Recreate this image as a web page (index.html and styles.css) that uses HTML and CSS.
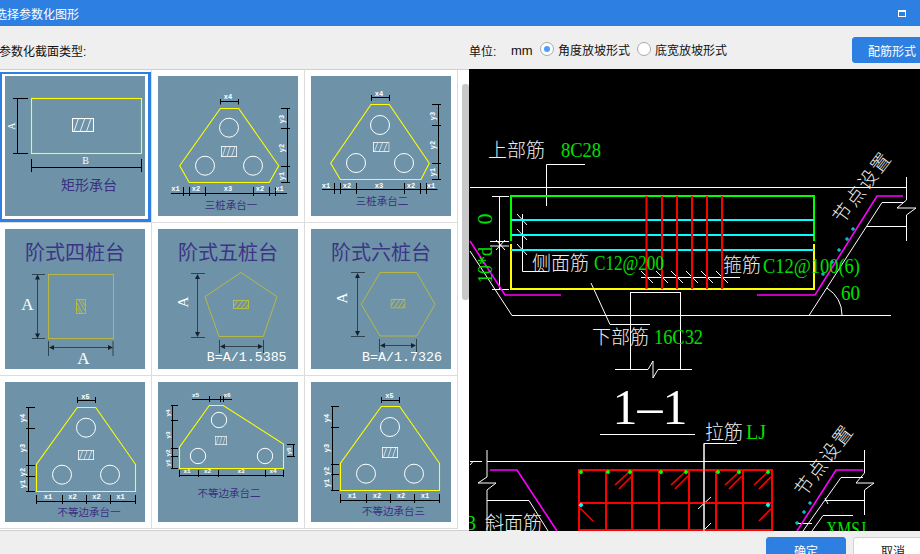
FILE: index.html
```html
<!DOCTYPE html>
<html lang="zh-CN">
<head>
<meta charset="UTF-8" />
<meta name="viewport" content="width=device-width, initial-scale=1" />
<title>选择参数化图形</title>
<link rel="stylesheet" href="styles.css">
</head>
<body>

<svg class="defs" width="0" height="0" aria-hidden="true">
  <symbol id="hatch" viewBox="0 0 21 13" preserveAspectRatio="none">
    <rect class="hatch-box" x="0.5" y="0.5" width="20" height="12"/>
    <path class="hatch-line" d="M2 12L6 1M8 12L12 1M14 12L18 1"/>
  </symbol>
  <symbol id="hatch-small" viewBox="0 0 15 9" preserveAspectRatio="none">
    <rect class="hatch-soft" x="0.5" y="0.5" width="14" height="8"/>
    <path class="hatch-soft" d="M1 6L4 1M4 8L9 1M8 8L13 1M12 8L14 5"/>
  </symbol>
</svg>

<div class="app">
  <div class="titlebar">
    <span class="title">选择参数化图形</span>
    <span class="max-btn"></span>
  </div>

  <div class="toolbar">
    <div class="type-label">参数化截面类型:</div>
    <div class="unit-label">单位:</div>
    <div class="unit">mm</div>
    <span class="radio checked"></span>
    <span class="radio-text">角度放坡形式</span>
    <span class="radio"></span>
    <span class="radio-text">底宽放坡形式</span>
    <button class="btn primary bar-btn">配筋形式</button>
  </div>

  <div class="main">
    <div class="picker">
      <div class="grid">

        <div class="cell selected">
          <svg class="tile" viewBox="0 0 140 140">
            <rect class="outline" x="26.5" y="22.5" width="110" height="55"/>
            <path class="dim" d="M8 22.5H23M8 77.5H23M12.5 22.5V77.5M26.5 83V96M136.5 83V96M26.5 91.5H136.5"/>
            <text class="dim-big" transform="rotate(-90 6 50)" x="6" y="50">A</text>
            <text class="dim-big" x="80.5" y="84">B</text>
            <use href="#hatch" x="67" y="42" width="22" height="14"/>
            <text class="caption large" x="84" y="108">矩形承台</text>
          </svg>
        </div>

        <div class="cell">
          <svg class="tile" viewBox="0 0 140 140">
            <path class="outline" d="M62.3 32.5H80.7L120.7 89.7L111.3 106.5H31.3L21.7 89.7Z"/>
            <circle class="pile" cx="71" cy="51.7" r="9.5"/>
            <circle class="pile" cx="47" cy="89.7" r="9.5"/>
            <circle class="pile" cx="95" cy="89.7" r="9.5"/>
            <use href="#hatch" x="63" y="70" width="16" height="11"/>
            <path class="dim" d="M62.5 23V28.5M80.5 23V28.5M62.5 25.5H80.5M129.5 32.5V106.5M123 32.5H132M123 52.5H132M123 90.5H132M123 106.5H132M13 117.5H129M25.5 111V120M31.5 111V120M47.5 111V120M95.5 111V120M111.5 111V120M117.5 111V120"/>
            <text class="mark" x="70" y="20.5">x4</text>
            <text class="mark" transform="rotate(-90 124 43)" x="124" y="43">y3</text>
            <text class="mark" transform="rotate(-90 124 72)" x="124" y="72">y2</text>
            <text class="mark" transform="rotate(-90 124 100)" x="124" y="100">y1</text>
            <text class="mark" x="17.5" y="113">x1</text>
            <text class="mark" x="38" y="113">x2</text>
            <text class="mark" x="70" y="113">x3</text>
            <text class="mark" x="102" y="113">x2</text>
            <text class="mark" x="121.5" y="113">x1</text>
            <text class="caption" x="73" y="128">三桩承台一</text>
          </svg>
        </div>

        <div class="cell">
          <svg class="tile" viewBox="0 0 140 140">
            <path class="outline" d="M60 28.5H78.3L118.3 87.3L110 103.5H29.3L19.7 87.3Z"/>
            <circle class="pile" cx="69" cy="49" r="9.5"/>
            <circle class="pile" cx="45" cy="87" r="9.5"/>
            <circle class="pile" cx="93" cy="87" r="9.5"/>
            <use href="#hatch" x="62" y="66" width="16.5" height="10"/>
            <path class="dim" d="M60.5 19V25M78.5 19V25M60.5 21.5H78.5M127.5 28.5V103.5M121 28.5H130M121 49.5H130M121 87.5H130M121 103.5H130M11 113.5H126.5M23.5 107V118M29.5 107V118M45.5 107V118M93.5 107V118M109.5 107V118M115.5 107V118"/>
            <text class="mark" x="68" y="17.5">x4</text>
            <text class="mark" transform="rotate(-90 121.5 40)" x="121.5" y="40">y3</text>
            <text class="mark" transform="rotate(-90 121.5 69)" x="121.5" y="69">y2</text>
            <text class="mark" transform="rotate(-90 121.5 96)" x="121.5" y="96">y1</text>
            <text class="mark" x="15" y="109.5">x1</text>
            <text class="mark" x="36" y="109.5">x2</text>
            <text class="mark" x="68" y="109.5">x3</text>
            <text class="mark" x="100" y="109.5">x2</text>
            <text class="mark" x="120" y="109.5">x1</text>
            <text class="caption" x="71" y="124">三桩承台二</text>
          </svg>
        </div>

        <div class="cell">
          <svg class="tile" viewBox="0 0 140 140">
            <text class="heading" x="70" y="22">阶式四桩台</text>
            <rect class="soft-outline" x="43.5" y="45.5" width="65" height="64"/>
            <rect class="soft-outline" x="71.5" y="70.5" width="9" height="14"/>
            <path class="hatch-soft" d="M72 74L77 84M72 79L75 84M74 71L80 82M77 71L80 77"/>
            <path class="soft-dim" d="M27 45.5H40M27 109.5H40M32.5 47V108M43.5 112V127M108 112V127M45 118.5H107"/>
            <path class="arrow" d="M32.5 45.5l-2.5 5h5zM32.5 109.5l-2.5 -5h5zM44 118.5l5 -2.5v5zM108 118.5l-5 -2.5v5z"/>
            <text class="letter" x="22.5" y="75">A</text>
            <text class="letter" x="78.5" y="129">A</text>
          </svg>
        </div>

        <div class="cell">
          <svg class="tile" viewBox="0 0 140 140">
            <text class="heading" x="70" y="22">阶式五桩台</text>
            <path class="soft-outline" d="M83 43.5L119 67.7L105.3 107.5H61L47 67.7Z"/>
            <use href="#hatch-small" x="75" y="71" width="16" height="9"/>
            <path class="soft-dim" d="M33 44.5H47M33 108.5H47M39.5 46V107M61.5 111V124M105.5 111V124M63 117.5H104"/>
            <path class="arrow" d="M39.5 45l-2.5 5h5zM39.5 108l-2.5 -5h5zM62 117.5l5 -2.5v5zM105 117.5l-5 -2.5v5z"/>
            <text class="letter side" transform="rotate(-90 25 73)" x="25" y="73">A</text>
            <text class="formula" x="88.7" y="128">B=A/1.5385</text>
          </svg>
        </div>

        <div class="cell">
          <svg class="tile" viewBox="0 0 140 140">
            <text class="heading" x="70" y="22">阶式六桩台</text>
            <path class="soft-outline" d="M69 43.5H105.7L124 75.3L105.7 107H69L50.3 75.3Z"/>
            <use href="#hatch-small" x="79.5" y="70" width="15" height="9.5"/>
            <path class="soft-dim" d="M40 43.5H54M40 107.5H54M46.5 45V106M68.5 110V123M105.5 110V123M70 116.5H104"/>
            <path class="arrow" d="M46.5 44l-2.5 5h5zM46.5 107l-2.5 -5h5zM69 116.5l5 -2.5v5zM105 116.5l-5 -2.5v5z"/>
            <text class="letter side" transform="rotate(-90 31 69)" x="31" y="69">A</text>
            <text class="formula" x="91" y="128">B=A/1.7326</text>
          </svg>
        </div>

        <div class="cell">
          <svg class="tile" viewBox="0 0 140 140">
            <path class="outline" d="M72.3 25.5H90.7L130.5 82.3V109.5H31.5V82.3Z"/>
            <circle class="pile" cx="81" cy="45.7" r="9.5"/>
            <circle class="pile" cx="57" cy="92.7" r="9.5"/>
            <circle class="pile" cx="105" cy="92.7" r="9.5"/>
            <use href="#hatch" x="73" y="68" width="16" height="10"/>
            <path class="dim" d="M72.5 15V21M90.5 15V21M72.5 18.5H90.5M23.5 25.5V109.5M21 25.5H30M21 46.5H30M21 83.5H30M21 94.5H30M21 109.5H30M31.5 113V122M57.5 113V122M81.5 113V122M105.5 113V122M130.5 113V122M31.5 119.5H130.5"/>
            <text class="mark" x="80.5" y="14.5">x5</text>
            <text class="mark" transform="rotate(-90 17.5 36)" x="17.5" y="36">y4</text>
            <text class="mark" transform="rotate(-90 17.5 66)" x="17.5" y="66">y3</text>
            <text class="mark" transform="rotate(-90 17.5 90)" x="17.5" y="90">y2</text>
            <text class="mark" transform="rotate(-90 17.5 102)" x="17.5" y="102">y1</text>
            <text class="mark" x="43" y="114.5">x1</text>
            <text class="mark" x="67.5" y="114.5">x2</text>
            <text class="mark" x="91.5" y="114.5">x2</text>
            <text class="mark" x="115.5" y="114.5">x1</text>
            <text class="caption" x="84" y="129.5">不等边承台一</text>
          </svg>
        </div>

        <div class="cell">
          <svg class="tile" viewBox="0 0 140 140">
            <path class="outline" d="M51.3 23.5H65.3L125.5 62V86.5H21.5V65.3Z"/>
            <circle class="pile" cx="61" cy="38" r="7.7"/>
            <circle class="pile" cx="40" cy="74" r="7.7"/>
            <circle class="pile" cx="107" cy="74" r="7.7"/>
            <use href="#hatch" x="57" y="54" width="12" height="9"/>
            <path class="dim" d="M34 17.5H74M51.5 14V20M62.5 14V20M65.5 14V20M14.5 23.5V86.5M13 23.5H20M13 38.5H20M13 66.5H20M13 74.5H20M13 86.5H20M129 62.5H137M129 74.5H137M135.5 62.5V74.5M21.5 88V95M40.5 88V95M60.5 88V95M107.5 88V95M125.5 88V95M21.5 93.5H125.5"/>
            <text class="mark small" x="37.5" y="13.5">x5</text>
            <text class="mark small" x="69" y="13.5">x6</text>
            <text class="mark small" transform="rotate(-90 10.5 31)" x="10.5" y="31">y4</text>
            <text class="mark small" transform="rotate(-90 10.5 53)" x="10.5" y="53">y3</text>
            <text class="mark small" transform="rotate(-90 10.5 71)" x="10.5" y="71">y2</text>
            <text class="mark small" transform="rotate(-90 10.5 81)" x="10.5" y="81">y1</text>
            <text class="mark small" transform="rotate(-90 131 69)" x="131" y="69">y5</text>
            <text class="mark small" x="29" y="89">x1</text>
            <text class="mark small" x="49.5" y="89">x2</text>
            <text class="mark small" x="83" y="89">x3</text>
            <text class="mark small" x="115" y="89">x4</text>
            <text class="caption" x="71" y="110.5">不等边承台二</text>
          </svg>
        </div>

        <div class="cell">
          <svg class="tile" viewBox="0 0 140 140">
            <path class="outline" d="M70.3 24.5H88.7L128.5 81.3V108.5H29.5V81.3Z"/>
            <circle class="pile" cx="79" cy="45" r="9.5"/>
            <circle class="pile" cx="55" cy="91.7" r="9.5"/>
            <circle class="pile" cx="103" cy="91.7" r="9.5"/>
            <use href="#hatch" x="71" y="65" width="16" height="11"/>
            <path class="dim" d="M70.5 15V21M88.5 15V21M70.5 18.5H88.5M21.5 24.5V108.5M20 24.5H28M20 45.5H28M20 82.5H28M20 92.5H28M20 108.5H28M29.5 112V121M55.5 112V121M79.5 112V121M103.5 112V121M128.5 112V121M29.5 118.5H128.5"/>
            <text class="mark" x="78.5" y="14">x5</text>
            <text class="mark" transform="rotate(-90 15.5 36)" x="15.5" y="36">y4</text>
            <text class="mark" transform="rotate(-90 15.5 66)" x="15.5" y="66">y3</text>
            <text class="mark" transform="rotate(-90 15.5 89)" x="15.5" y="89">y2</text>
            <text class="mark" transform="rotate(-90 15.5 101)" x="15.5" y="101">y1</text>
            <text class="mark" x="41" y="113.5">x1</text>
            <text class="mark" x="66" y="113.5">x2</text>
            <text class="mark" x="90" y="113.5">x2</text>
            <text class="mark" x="114" y="113.5">x1</text>
            <text class="caption" x="82.5" y="128.5">不等边承台三</text>
          </svg>
        </div>

      </div>
      <div class="scroll-track"><div class="scroll-thumb"></div></div>
    </div>

    <div class="preview">
      <svg class="cad" viewBox="469 69 451 462">
        <!-- section 1-1 upper -->
        <path class="cad-line" d="M470 187.5H907M906.5 177V200L897 208H916L906.5 215V241M867 226.5H907M546.5 206V164.5H585"/>
        <path class="cad-line" d="M492 196.5H509M490 241.5H509M490 246H509M492 289.5H509M499.5 196V289"/>
        <path class="cad-line" d="M496 240L505 250M496 250L505 240"/>
        <path class="cad-line" d="M517 214L527 225M517 229L527 240M517 244L527 255M522.5 214V271.5H547"/>
        <path class="cad-line" d="M641 277.5H740M641 271L653 283M656 271L668 283M671 271L683 283M686 271L698 283M701 271L713 283M716 271L728 283"/>
        <path class="cad-line" d="M470 251L512 315.5H891M809 315.5L882 202.5H903M827 288Q842 298 842 315"/>
        <path class="cad-line" d="M591 283L610 324.5H650M630.5 292V369M680.5 292V369M630.5 292.5H680.5M615 369.5H648L653 361V378L658 369.5H692"/>
        <path class="cad-bar green" d="M511 241V196H814V241"/>
        <path class="cad-bar yellow" d="M511 244V289H814V244"/>
        <path class="cad-bar cyan" d="M511 220H814M511 235H814M511 250H814"/>
        <path class="cad-bar red" d="M646.5 196V289M662 196V289M677 196V289M692 196V289M707 196V289M722 196V289"/>
        <path class="cad-hook" d="M470 241L505 295H561M757 295H815L877 196H903"/>
        <path class="cad-dots" d="M823 272v4M821 274h4M832 260v4M830 262h4M839 248v4M837 250h4M847 237v4M845 239h4M853 227v4M851 229h4"/>

        <text class="cad-cn" x="488" y="157">上部筋</text>
        <text class="cad-num" x="561" y="157" textLength="40" lengthAdjust="spacingAndGlyphs">8C28</text>
        <text class="cad-num tall" transform="rotate(-90 492 219)" x="492" y="219" text-anchor="middle">0</text>
        <text class="cad-num tall" transform="rotate(-90 492 265)" x="492" y="265" text-anchor="middle" textLength="36" lengthAdjust="spacingAndGlyphs">10*d</text>
        <text class="cad-cn" x="532" y="270">侧面筋</text>
        <text class="cad-num" x="594" y="270" textLength="70" lengthAdjust="spacingAndGlyphs">C12@200</text>
        <text class="cad-cn" x="723" y="272">箍筋</text>
        <text class="cad-num" x="763" y="273" textLength="97" lengthAdjust="spacingAndGlyphs">C12@100(6)</text>
        <text class="cad-num" x="841" y="300" textLength="19" lengthAdjust="spacingAndGlyphs">60</text>
        <text class="cad-cn spaced" transform="rotate(-53 862 187)" x="862" y="194" text-anchor="middle">节点设置</text>
        <text class="cad-cn" x="592" y="344">下部筋</text>
        <text class="cad-num" x="654" y="344" textLength="49" lengthAdjust="spacingAndGlyphs">16C32</text>

        <text class="cad-title" x="650" y="424">1–1</text>
        <path class="cad-line" d="M600 434.5H695"/>
        <text class="cad-cn" x="705" y="439">拉筋</text>
        <text class="cad-num" x="746" y="439" textLength="20" lengthAdjust="spacingAndGlyphs">LJ</text>

        <!-- section lower -->
        <path class="cad-line" d="M487 461.5H864M470 461.5H482M470 465L473 461.5M487 450V477L478 483H496L487 490V531M487 500.5H529L548 531"/>
        <path class="cad-line" d="M864.5 450V473L856 483H874L864.5 490V515M825 500.5H864M704 531V443.5H737M803 531L841 477.5H863M812 531L823 515.5H853M798 523.5H812"/>
        <path class="cad-line" d="M698 509L711 497M704 530L711 523M825 498L828 504"/>
        <path class="cad-bar red" d="M579 470H772V530H579ZM606 470V530M632 470V530M659 470V530M689 470V530M716 470V530M743 470V530M579 503H772"/>
        <path class="cad-bar red thin" d="M615 485L629 472M619 489L632 476M671 485L685 472M675 489L688 476M725 485L739 472M729 489L742 476M754 485L768 472M759 489L772 476M580 508L593 521M759 521L772 508"/>
        <path class="cad-line" d="M704 531V443.5"/>
        <path class="cad-hook" d="M490 470H517L557 531M797 531L836 470H863"/>
        <path class="cad-node green" d="M581 469.5l2.5 2.5l-2.5 2.5l-2.5 -2.5zM608 469.5l2.5 2.5l-2.5 2.5l-2.5 -2.5zM630 469.5l2.5 2.5l-2.5 2.5l-2.5 -2.5zM661 469.5l2.5 2.5l-2.5 2.5l-2.5 -2.5zM686 469.5l2.5 2.5l-2.5 2.5l-2.5 -2.5zM718 469.5l2.5 2.5l-2.5 2.5l-2.5 -2.5zM739 469.5l2.5 2.5l-2.5 2.5l-2.5 -2.5zM768 469.5l2.5 2.5l-2.5 2.5l-2.5 -2.5z"/>
        <path class="cad-node cyan" d="M581 502.5l2.5 2.5l-2.5 2.5l-2.5 -2.5zM768 502.5l2.5 2.5l-2.5 2.5l-2.5 -2.5z"/>
        <path class="cad-dots" d="M810 501v4M808 503h4M804 510v4M802 512h4M797 521v4M795 523h4"/>
        <text class="cad-cn spaced" transform="rotate(-53 824 460)" x="824" y="467" text-anchor="middle">节点设置</text>
        <text class="cad-cn" x="485" y="530">斜面筋</text>
        <text class="cad-num" x="476" y="530" text-anchor="end">3</text>
        <text class="cad-num" x="826" y="536" textLength="40" lengthAdjust="spacingAndGlyphs">XMSJ</text>
      </svg>
    </div>
  </div>

  <div class="footer">
    <button class="btn primary">确定</button>
    <button class="btn">取消</button>
  </div>
</div>

</body>
</html>
```

FILE: styles.css
```css
html, body {
  margin: 0; padding: 0;
  overflow: hidden;
  font-family: "Liberation Sans", "Noto Sans CJK SC", sans-serif;
  font-size: 12px;
  color: #111;
}
.defs {
  display: block;
  height: 0;
}
.app {
  width: 920px;
  height: 554px;
  display: flex;
  flex-direction: column;
  overflow: hidden;
  background: #efefef;
}

/* title bar */
.titlebar {
  flex: 0 0 26px;
  display: flex;
  align-items: center;
  justify-content: space-between;
  padding-right: 14px;
  background: #2e7fe2;
  color: #fff;
}
.title {
  margin-left: -5px;
}
.max-btn {
  width: 6px;
  height: 4px;
  border: 1px solid #fff;
  border-top-width: 2px;
}

/* toolbar */
.toolbar {
  flex: 0 0 43px;
  box-sizing: border-box;
  display: flex;
  align-items: center;
  padding-top: 5px;
}
.type-label {
  width: 469px;
  margin-left: -1px;
  flex: none;
}
.unit-label {
  width: 42px;
  flex: none;
  margin-left: 1px;
}
.unit {
  width: 29px;
  flex: none;
  font-size: 13px;
}
.radio {
  width: 12px;
  height: 12px;
  flex: none;
  border: 1px solid #a9a9a9;
  border-radius: 50%;
  background: #fff;
  display: flex;
  align-items: center;
  justify-content: center;
  margin-top: -3px;
}
.radio.checked::before {
  content: "";
  width: 6px;
  height: 6px;
  border-radius: 50%;
  background: #4c9dfb;
}
.radio-text {
  width: 72px;
  margin: -2px 7px 0 4px;
  flex: none;
}
.btn {
  width: 80px;
  height: 26px;
  flex: none;
  padding: 0;
  border: 1px solid #d2d2d2;
  border-radius: 3px;
  background: #fff;
  color: #222;
  font-family: inherit;
  font-size: 12px;
}
.btn.primary {
  border-color: #2e7fe2;
  background: #2e7fe2;
  color: #fff;
}
.bar-btn {
  margin-left: auto;
  margin-right: -12px;
}

/* main area */
.main {
  flex: 0 0 462px;
  display: flex;
}
.picker {
  width: 469px;
  box-sizing: border-box;
  display: flex;
  border-top: 1px solid #d0d0d0;
  border-bottom: 1px solid #d0d0d0;
  background: #fff;
}
.grid {
  width: 459px;
  margin-left: -1px;
  flex: none;
  display: grid;
  grid-template-columns: repeat(3, 153px);
  grid-auto-rows: 153px;
}
.cell {
  position: relative;
  box-sizing: border-box;
  padding: 6px 0 0 6px;
  border-right: 1px solid #dcdcdc;
  border-bottom: 1px solid #dcdcdc;
}
.cell.selected::after {
  content: "";
  position: absolute;
  top: 2px; left: 1px;
  right: 0; bottom: 0;
  border: 2px solid #2e7fe2;
  border-right-width: 3px;
  border-bottom-width: 3px;
}
.scroll-track {
  flex: 1;
  padding: 14px 0 0 4px;
}
.scroll-thumb {
  width: 7px;
  height: 216px;
  border-radius: 3px;
  background: #c8c8c8;
}
.preview {
  flex: 1;
  background: #000;
}
.cad {
  display: block;
  width: 451px;
  height: 462px;
}

/* footer */
.footer {
  flex: 1;
  display: flex;
  justify-content: flex-end;
  gap: 7px;
  padding-top: 6px;
  margin-right: -13px;
}

/* parametric tiles */
.tile {
  display: block;
  width: 140px;
  height: 140px;
  background: #6e93a8;
}
.outline {
  fill: none;
  stroke: #ffff00;
  stroke-width: 1.1;
}
.soft-outline {
  fill: none;
  stroke: #b5b845;
  stroke-width: 1;
}
.pile {
  fill: none;
  stroke: #fff;
  stroke-width: 1;
}
.dim {
  fill: none;
  stroke: #000;
  stroke-width: 1;
}
.soft-dim {
  fill: none;
  stroke: #2f4350;
  stroke-width: 1;
}
.arrow {
  fill: #17222a;
}
.hatch-box {
  fill: none;
  stroke: #fff;
  stroke-width: 1;
}
.hatch-line {
  fill: none;
  stroke: #fff;
  stroke-width: 0.8;
}
.hatch-soft {
  fill: none;
  stroke: #c4c63a;
  stroke-width: 0.8;
}
.tile text {
  text-anchor: middle;
  dominant-baseline: central;
}
.mark {
  fill: #fff;
  font-family: "Liberation Mono", monospace;
  font-size: 7px;
  font-weight: bold;
}
.mark.small {
  font-size: 6px;
}
.dim-big {
  fill: #fff;
  font-family: "Liberation Serif", serif;
  font-size: 10px;
}
.caption {
  fill: #3a2f80;
  font-family: "Noto Sans CJK SC", sans-serif;
  font-size: 10.5px;
}
.caption.large {
  font-size: 14px;
}
.heading {
  fill: #3c3585;
  font-family: "Noto Sans CJK SC", sans-serif;
  font-size: 20px;
}
.letter {
  fill: #fff;
  font-family: "Liberation Serif", serif;
  font-size: 17px;
}
.letter.side {
  font-size: 15px;
}
.formula {
  fill: #fff;
  font-family: "Liberation Mono", monospace;
  font-size: 13.3px;
}

/* cad drawing */
.cad-line {
  fill: none;
  stroke: #fff;
  stroke-width: 1;
}
.cad-bar {
  fill: none;
  stroke-width: 2;
}
.cad-bar.green { stroke: #00ff00; }
.cad-bar.yellow { stroke: #ffff00; }
.cad-bar.cyan { stroke: #00ffff; }
.cad-bar.red { stroke: #ff0000; }
.cad-bar.thin { stroke-width: 1.6; }
.cad-hook {
  fill: none;
  stroke: #ff00ff;
  stroke-width: 1.6;
}
.cad-dots {
  fill: none;
  stroke: #00ffff;
  stroke-width: 1;
}
.cad-node.green { fill: #00ff00; }
.cad-node.cyan { fill: #00ffff; }
.cad-cn {
  fill: #eeeeee;
  font-family: "Noto Sans CJK SC", sans-serif;
  font-size: 19px;
  font-weight: 300;
}
.cad-cn.spaced {
  letter-spacing: 2px;
}
.cad-num {
  fill: #00e000;
  font-family: "Liberation Serif", serif;
  font-size: 20px;
}
.cad-num.tall {
  font-size: 22px;
}
.cad-title {
  fill: #fff;
  font-family: "Liberation Serif", serif;
  font-size: 50px;
  text-anchor: middle;
}
```
